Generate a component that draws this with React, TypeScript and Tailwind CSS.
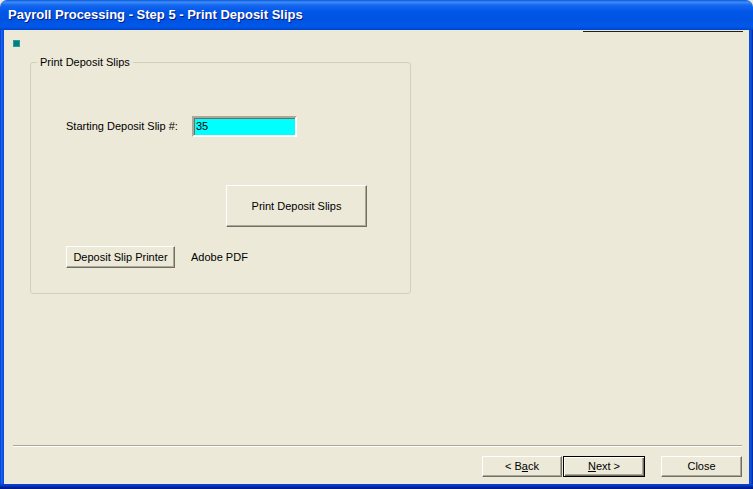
import React from "react";

const btn =
  "flex items-center justify-center bg-[#ECE9D8] border border-t-white border-l-white border-r-[#716F64] border-b-[#716F64] shadow-[inset_-1px_-1px_0_#ACA899] text-[11px] text-black";

export default function App() {
  return (
    <div
      className="w-[753px] h-[489px] flex flex-col bg-[#ECE9D8] overflow-hidden"
      style={{ fontFamily: '"Liberation Sans", Arial, sans-serif' }}
    >
      {/* Title bar */}
      <div className="h-[30px] flex items-center pl-[8px] rounded-t-[7px] bg-[linear-gradient(to_bottom,#0A58DC_0%,#3D8DF7_7%,#1566F0_18%,#0056E6_40%,#0053E2_70%,#0059EA_88%,#0044C8_100%)]">
        <span
          className="text-white font-bold text-[13px] tracking-[0px]"
          style={{ textShadow: "1px 1px 0 #0A1C80" }}
        >
          Payroll Processing - Step 5 - Print Deposit Slips
        </span>
      </div>
      <div className="flex-1 flex">
        {/* left frame */}
        <div className="w-[4px] bg-[linear-gradient(to_right,#0831C8,#166AEE,#0B55E6,#0847D9)]" />
        {/* client */}
        <div className="flex-1 flex flex-col bg-[#ECE9D8]">
          <div className="h-[1px] mt-[1px] pl-[579px] flex">
            <div className="w-[160px] h-[1px] bg-[#202020]" />
          </div>
          <div className="ml-[9px] mt-[8px] w-[7px] h-[7px] bg-[#008080] border border-[#2A9C98]" />
          {/* group box */}
          <div className="relative ml-[26px] mt-[15px] w-[381px] h-[232px] border border-[#D0D0BF] rounded-[3px] pt-[53px] pl-[35px]">
            <div className="absolute left-[6px] top-[-8px] px-[3px] bg-[#ECE9D8] text-[11px] leading-[14px] text-black">
              Print Deposit Slips
            </div>
            <div className="flex items-center h-[21px]">
              <div className="w-[126px] text-[11px] text-black">Starting Deposit Slip #:</div>
              <div className="w-[105px] h-[21px] bg-[#00FFFF] border-2 border-t-[#ACA899] border-l-[#ACA899] border-r-white border-b-white shadow-[inset_1px_1px_0_#716F64] flex items-center pl-[2px] text-[11px] text-black">
                35
              </div>
            </div>
            <div className="mt-[48px] ml-[160px]">
              <div className={btn + " w-[141px] h-[42px]"}>Print Deposit Slips</div>
            </div>
            <div className="mt-[19px] flex items-center">
              <div className={btn + " w-[109px] h-[22px]"}>Deposit Slip Printer</div>
              <div className="ml-[16px] text-[11px] text-black">Adobe PDF</div>
            </div>
          </div>
          <div className="flex-1" />
          {/* separator */}
          <div className="ml-[9px] mr-[7px] h-[2px] border-t border-t-[#ACA899] border-b border-b-white" />
          <div className="flex justify-end pr-[7px] pt-[9px] pb-[7px]">
            <div className={btn + " w-[80px] h-[21px]"}>
              &lt; B<span className="underline">a</span>ck
            </div>
            <div className="w-[82px] h-[21px] ml-[1px] flex items-center justify-center bg-[#ECE9D8] border border-black shadow-[inset_1px_1px_0_#FFFFFF,inset_-1px_-1px_0_#716F64,inset_-2px_-2px_0_#ACA899] text-[11px] text-black">
              <span className="underline">N</span>ext &gt;
            </div>
            <div className={btn + " w-[81px] h-[21px] ml-[16px]"}>Close</div>
          </div>
        </div>
        {/* right frame */}
        <div className="w-[4px] bg-[linear-gradient(to_right,#0847D9,#0B55E6,#0A45C8,#00229A)]" />
      </div>
      {/* bottom frame */}
      <div className="h-[5px] bg-[linear-gradient(to_bottom,#0847D9,#0638C0,#00209E,#001A80)]" />
    </div>
  );
}
